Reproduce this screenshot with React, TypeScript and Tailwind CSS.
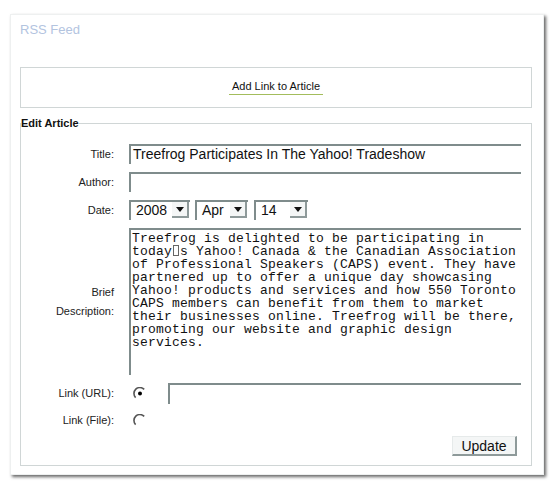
import React from "react";

const Arrow = () => (
  <svg width="8" height="5" viewBox="0 0 8 5">
    <path d="M0 0 L8 0 L4 5 Z" fill="#111" />
  </svg>
);

function Select({ value, w }: { value: string; w: string }) {
  return (
    <div className={`flex h-[20px] ${w} border-l-2 border-t-2 border-[#7f8c8c] bg-white`}>
      <span className="flex-1 pl-[5px] text-[14px] leading-[17px] text-[#111]">{value}</span>
      <div className="mr-[1px] flex h-[16px] w-[17px] items-center justify-center border-b-2 border-r-2 border-[#8e9a9a] bg-[#f4f6f6]">
        <Arrow />
      </div>
    </div>
  );
}

function Radio({ checked }: { checked?: boolean }) {
  return (
    <svg width="13" height="13" viewBox="0 0 13 13">
      <path d="M2.6 10.6 A5 5 0 0 1 11.2 2.4" fill="none" stroke="#555" strokeWidth="1.6" />
      {checked && <circle cx="7" cy="6.6" r="2" fill="#000" />}
    </svg>
  );
}

const Label = ({ children }: { children: React.ReactNode }) => (
  <div className="w-[94px] shrink-0 pr-[1px] text-right text-[11px] leading-[19px] text-[#222]">{children}</div>
);

const lines = [
  "Treefrog is delighted to be participating in",
  "BOX",
  "of Professional Speakers (CAPS) event. They have",
  "partnered up to offer a unique day showcasing",
  "Yahoo! products and services and how 550 Toronto",
  "CAPS members can benefit from them to market",
  "their businesses online. Treefrog will be there,",
  "promoting our website and graphic design",
  "services.",
];

export default function App() {
  return (
    <div className="h-[487px] w-[558px] bg-white" style={{ fontFamily: '"Liberation Sans", Arial, sans-serif' }}>
      <div className="ml-[10px] pt-[14px]">
        <div className="h-[461px] w-[534px] border border-[#eef0f0] bg-white pl-[9px] shadow-[2px_2px_3px_rgba(0,0,0,0.6)]">
          <div className="pt-[7px] text-[13px] leading-[16px] text-[#b3c4df]">RSS Feed</div>
          <div className="mt-[29px] flex h-[41px] w-[512px] items-center justify-center border border-[#d0d6d6]">
            <span className="border-b border-[#a3bd5c] px-[3px] pb-[1px] text-[11px] leading-[13px] text-[#111]">
              Add Link to Article
            </span>
          </div>
          <fieldset className="mt-[8px] w-[512px] border border-[#d0d6d6] pb-[9px] pr-[10px] pt-[14px]">
            <legend className="text-[11px] font-bold leading-[14px] text-[#111]">Edit Article</legend>
            <div className="flex flex-col gap-[8px]">
              <div className="flex items-center gap-[14px]">
                <Label>Title:</Label>
                <div className="h-[20px] flex-1 border-l-2 border-t-2 border-[#7f8c8c] pl-[2px] text-[14px] leading-[17px] text-[#111]">
                  Treefrog Participates In The Yahoo! Tradeshow
                </div>
              </div>
              <div className="flex items-center gap-[14px]">
                <Label>Author:</Label>
                <div className="h-[20px] flex-1 border-l-2 border-t-2 border-[#7f8c8c]" />
              </div>
              <div className="flex items-center gap-[14px]">
                <Label>Date:</Label>
                <div className="flex gap-[4px]">
                  <Select value="2008" w="w-[61px]" />
                  <div className="ml-[1px]">
                    <Select value="Apr" w="w-[53px]" />
                  </div>
                  <div className="ml-[2px]">
                    <Select value="14" w="w-[54px]" />
                  </div>
                </div>
              </div>
              <div className="flex items-center gap-[14px]">
                <Label>
                  Brief
                  <br />
                  Description:
                </Label>
                <div
                  className="h-[147px] flex-1 border-l-2 border-t-2 border-[#7f8c8c] pl-[1px] pt-[2px] text-[13px] leading-[13px] tracking-[0.2px] text-[#111]"
                  style={{ fontFamily: '"Liberation Mono", "Courier New", monospace' }}
                >
                  {lines.map((l, i) =>
                    l === "BOX" ? (
                      <div key={i} className="whitespace-pre">
                        today
                        <span className="inline-block h-[11px] w-[8px] align-[-1px]">
                          <span className="ml-[1px] block h-[11px] w-[6px] border border-[#666]" />
                        </span>
                        s Yahoo! Canada &amp; the Canadian Association
                      </div>
                    ) : (
                      <div key={i} className="whitespace-pre">
                        {l}
                      </div>
                    )
                  )}
                </div>
              </div>
              <div className="flex items-center gap-[14px]">
                <Label>Link (URL):</Label>
                <div className="w-[39px] shrink-0 pl-[4px]">
                  <Radio checked />
                </div>
                <div className="-ml-[14px] h-[21px] flex-1 border-l-2 border-t-2 border-[#7f8c8c]" />
              </div>
              <div className="flex h-[16px] items-center gap-[14px]">
                <Label>Link (File):</Label>
                <div className="pl-[4px]">
                  <Radio />
                </div>
              </div>
              <div className="flex justify-end">
                <button className="mr-[4px] h-[20px] w-[65px] border-b-2 border-r-2 border-l border-t border-b-[#8e9a9a] border-r-[#8e9a9a] border-l-[#e6eaea] border-t-[#e6eaea] bg-[#f4f6f6] text-[14px] leading-[16px] text-[#111]">
                  Update
                </button>
              </div>
            </div>
          </fieldset>
        </div>
      </div>
    </div>
  );
}
